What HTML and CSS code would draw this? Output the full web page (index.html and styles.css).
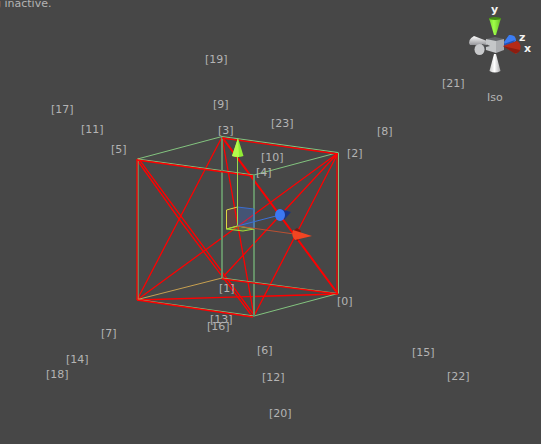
FILE: index.html
```html
<!DOCTYPE html>
<html lang="en">
<head>
<meta charset="utf-8">
<title>Scene view</title>
<link rel="stylesheet" href="styles.css">
</head>
<body>
<main class="viewport">
  <p class="status">g inactive.</p>

  <svg class="scene" width="541" height="444" viewBox="0 0 541 444" role="img" aria-label="Box mesh with vertex indices">
    <g class="triangles">
      <path class="diagonal" d="M137 300L222 137M137 300L338 153M137 300L338 294M222 137L254 316M338 153L222 278M338 153L254 316"/>
      <path class="diagonal" d="M138 158L254 315M137 160L179 219L252 316"/>
      <path class="strong" d="M222 137L338 294"/>
    </g>
    <g class="collider">
      <path d="M137.5 159L222 136.5L338 152.5L254 175ZM222 278L338 293.5L254 316L137.5 299.5M138 159V299.5M338.5 152.5V293.5"/>
      <path class="upright" d="M222 137V278M254 175V316"/>
      <path class="base" d="M137.5 299.5L222 278"/>
    </g>
    <g class="triangles">
      <path class="edge" d="M137 160L253 176M222 138L338 154M137 300L253 317M222 279L338 294"/>
      <path class="edge" d="M137 159V300M337 153V294"/>
    </g>
    <g class="handles">
      <path class="plane-x" d="M226.5 210L237.5 207V226L226.5 229Z"/>
      <path class="plane-z" d="M237.5 207L254 209V229L237.5 226Z"/>
      <path class="plane-y" d="M226.5 229L237.5 226L254 229L243 231Z"/>
      <path class="axis-y" d="M237.5 226V155"/>
      <path class="axis-z" d="M237.5 226L276 216"/>
      <path class="axis-x" d="M237.5 226L294 234"/>
      <path fill="#183484" d="M280 209L291 212L284 220Z"/>
      <ellipse cx="280" cy="215" rx="5" ry="6" fill="#3c78f2"/>
      <path fill="#7f160c" d="M293 231L297 228L301 231L298 241L294 239Z"/>
      <path fill="#f24522" d="M293 230L312 236L295 240Q291 236 293 230Z"/>
      <path fill="#92ed35" d="M238 138L243.500 156Q238 158 232 156Z"/>
      <path fill="#b5fa4d" d="M238 138L239 157Q235 157 232 156Z"/>
    </g>
    <g class="labels">
      <text x="205" y="63">[19]</text>
      <text x="442" y="87">[21]</text>
      <text x="51" y="113">[17]</text>
      <text x="213" y="108">[9]</text>
      <text x="81" y="133">[11]</text>
      <text x="271" y="127">[23]</text>
      <text x="377" y="135">[8]</text>
      <text x="218" y="134">[3]</text>
      <text x="111" y="153">[5]</text>
      <text x="347" y="157">[2]</text>
      <text x="261" y="161">[10]</text>
      <text x="256" y="176">[4]</text>
      <text x="219" y="292">[1]</text>
      <text x="337" y="305">[0]</text>
      <text x="210" y="323">[13]</text>
      <text x="207" y="330">[16]</text>
      <text x="101" y="337">[7]</text>
      <text x="257" y="354">[6]</text>
      <text x="412" y="356">[15]</text>
      <text x="66" y="363">[14]</text>
      <text x="46" y="378">[18]</text>
      <text x="262" y="381">[12]</text>
      <text x="447" y="380">[22]</text>
      <text x="269" y="417">[20]</text>
    </g>
  </svg>

  <svg class="compass" width="81" height="110" viewBox="460 0 81 110" role="img" aria-label="Orientation gizmo">
    <defs>
      <linearGradient id="cone-white"><stop offset="0" stop-color="#c8c8c8"/><stop offset=".45" stop-color="#fff"/><stop offset="1" stop-color="#a9a9ab"/></linearGradient>
      <linearGradient id="cone-green"><stop offset="0" stop-color="#76d72d"/><stop offset=".4" stop-color="#a0ff49"/><stop offset="1" stop-color="#65bd24"/></linearGradient>
      <linearGradient id="cone-side" x2="0" y2="1"><stop offset="0" stop-color="#fff"/><stop offset="1" stop-color="#96969a"/></linearGradient>
    </defs>
    <path fill="url(#cone-side)" d="M474 36L487 41V45L470 45Q467 40 474 36Z"/>
    <path fill="#505153" d="M482 44L490 46L483 52Z"/>
    <ellipse cx="479.500" cy="49.500" rx="5" ry="5.500" fill="#c8c9cb"/>
    <path fill="#626468" d="M486 39L495 37L504 39L496 42Z"/>
    <path fill="#c4c6c8" d="M486 39L496 41V53L486 50V47L490 46L486 44Z"/>
    <path fill="#aaacaf" d="M496 41L504 39V50L496 53Z"/>
    <path fill="#3c7df4" d="M504 42L509 35Q516 34 516 41L505 46Z"/>
    <path fill="#2452b5" d="M504 44L515 40L513 43L504 46Z"/>
    <path fill="#b62a17" d="M503 46L517 41Q522 44 520 50L516 54Z"/>
    <path fill="#8d1d10" d="M503 46L520 50Q518 54 514 53Z"/>
    <path fill="url(#cone-green)" d="M489 18H501L496 35H494Z"/>
    <ellipse cx="495" cy="18.500" rx="6" ry="1.500" fill="#438c13"/>
    <path fill="url(#cone-white)" d="M494 54H496L500.500 71Q495 74 489.500 71Z"/>
    <g class="axis-names">
      <text x="491" y="13">y</text>
      <text x="519" y="41">z</text>
      <text x="524" y="52">x</text>
    </g>
    <text class="projection" x="487" y="101">Iso</text>
  </svg>
</main>
</body>
</html>
```
FILE: styles.css
```css
body {
  margin: 0;
  background: #474747;
  font-family: "DejaVu Sans", sans-serif;
  font-size: 11px;
  color: #b4b4b4;
}

.viewport {
  position: relative;
  min-height: 100vh;
  overflow: hidden;
}

.status {
  position: absolute;
  top: -3px;
  left: -6px;
  margin: 0;
  line-height: 14px;
  white-space: nowrap;
}

.scene {
  display: block;
}

.compass {
  position: absolute;
  top: 0;
  right: 0;
}

.triangles,
.collider,
.handles path {
  fill: none;
  stroke-width: 1;
}

.triangles {
  stroke: #ff0000;
}

.triangles .diagonal,
.triangles .edge {
  stroke-width: 1.3;
}

.triangles .strong {
  stroke-width: 2;
}

.collider {
  stroke: #83c47f;
}

.collider .upright {
  stroke: #669068;
  stroke-width: 2;
}

.collider .base {
  stroke: #c7a050;
}

.handles path[fill] {
  fill: revert-layer;
}

.handles .plane-x {
  fill: #ff302022;
  stroke: #dbd743;
}

.handles .plane-z {
  fill: #3c78f244;
  stroke: #3b6ed0;
}

.handles .plane-y {
  fill: #92ed3533;
  stroke: #a2dc38;
}

.handles .axis-y {
  stroke: #9bd94a;
}

.handles .axis-z {
  stroke: #3c70d8;
}

.handles .axis-x {
  stroke: #ba5032;
}

.labels,
.projection {
  fill: #b4b4b4;
}

.axis-names {
  fill: #f4f4f4;
  font-weight: bold;
}
```
